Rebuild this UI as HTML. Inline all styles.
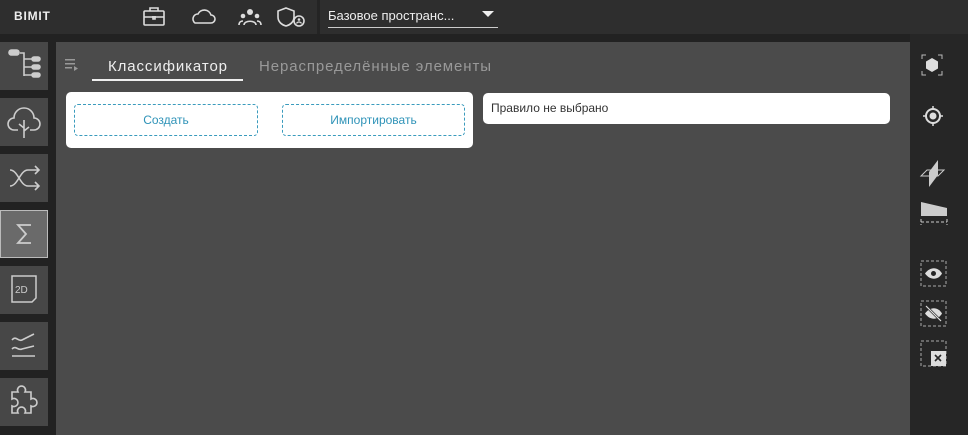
<!DOCTYPE html>
<html><head><meta charset="utf-8"><style>
*{margin:0;padding:0;box-sizing:border-box}
body{width:968px;height:435px;background:#222;font-family:"Liberation Sans",sans-serif;position:relative;overflow:hidden}
.top{position:absolute;left:0;top:0;width:968px;height:34px;background:#2e2e2e}
.sep{position:absolute;left:317px;top:0;width:3px;height:34px;background:#242424}
.main{position:absolute;left:56px;top:42px;width:854px;height:393px;background:#4b4b4b}
.rb{position:absolute;left:910px;top:34px;width:58px;height:401px;background:#262626}
.lb{position:absolute;left:0;width:48px;height:48px;background:#474747}
.lb svg{position:absolute;left:0;top:0}
.card{position:absolute;background:#fff;border-radius:5px}
.btn{position:absolute;border:1px dashed #3a9bbd;border-radius:4px;color:#2f93b8;font-size:12px;text-align:center;line-height:30px}
svg{display:block}
</style></head><body>
<div class="top"></div><div class="sep"></div>
<div style="position:absolute;left:14px;top:9px;color:#eee;font-weight:bold;font-size:12px;letter-spacing:0.8px">BIMIT</div>
<svg style="position:absolute;left:140px;top:4px" width="170" height="26" fill="none" stroke="#ddd" stroke-width="1.6">
<rect x="4" y="7" width="20" height="14" rx="1"/><path d="M10 7V4h8v3M4 13h20M13 12v3h2v-3"/>
<path d="M55 19h16a4 4 0 0 0 0-8 7 7 0 0 0-13-1 5 5 0 0 0-3 9z"/>
<g fill="#ddd" stroke="none"><circle cx="110" cy="8" r="3"/><circle cx="103" cy="12" r="2.3"/><circle cx="117" cy="12" r="2.3"/></g>
<path d="M104 21c0-5 12-5 12 0M99 21c0-3 2-4 4-4M121 21c0-3-2-4-4-4"/>
<path d="M146 4l8 3v6c0 5-4 8-8 9-4-1-8-4-8-9V7z"/><circle cx="159" cy="17" r="5" fill="#2e2e2e"/><circle cx="159" cy="15.5" r="1.3" fill="#ddd" stroke="none"/><path d="M156.5 19.5c1-2 4-2 5 0" stroke-width="1.2"/>
</svg>
<div style="position:absolute;left:328px;top:8px;color:#eee;font-size:13px">Базовое пространс...</div>
<div style="position:absolute;left:328px;top:27px;width:170px;height:1px;background:#ccc"></div>
<div style="position:absolute;left:482px;top:11px;width:0;height:0;border-left:6px solid transparent;border-right:6px solid transparent;border-top:6px solid #eee"></div>

<div class="lb" style="top:42px"><svg width="48" height="48" fill="none" stroke="#ccc" stroke-width="1.6"><rect x="9" y="8" width="10" height="5" rx="2.5" fill="#ccc"/><path d="M20 11h4v23M24 17h8M24 25h8M24 33h8"/><rect x="32" y="15" width="8" height="4" rx="2" fill="#ccc"/><rect x="32" y="23" width="8" height="4" rx="2" fill="#ccc"/><rect x="32" y="31" width="8" height="4" rx="2" fill="#ccc"/></svg></div>
<div class="lb" style="top:98px"><svg width="48" height="48" fill="none" stroke="#ccc" stroke-width="1.6"><path d="M18 32h-4a6 6 0 0 1 0-12 10 10 0 0 1 20 0 6 6 0 0 1 0 12h-4M24 40V22M24 30l-5-4M24 33l5-4"/></svg></div>
<div class="lb" style="top:154px"><svg width="48" height="48" fill="none" stroke="#ccc" stroke-width="1.6"><path d="M10 16c8 0 10 16 18 16h11M10 32c8 0 10-16 18-16h11M35 12l4 4-4 4M35 28l4 4-4 4"/></svg></div>
<div class="lb" style="top:210px;background:#6a6a6a;border:1px solid #bbb"><svg width="46" height="46" fill="none" stroke="#ccc" stroke-width="1.8"><path d="M30 14H17l8 9-8 9h13"/></svg></div>
<div class="lb" style="top:266px"><svg width="48" height="48" fill="none" stroke="#ccc" stroke-width="1.5"><path d="M12 10h24v22l-4 4H12z"/><text x="15" y="27" fill="#ccc" stroke="none" font-size="10" font-family="Liberation Sans">2D</text></svg></div>
<div class="lb" style="top:322px"><svg width="48" height="48" fill="none" stroke="#ccc" stroke-width="1.6"><path d="M12 18c4-5 6 2 10 0l12-6M12 27c4-4 6 2 10 0l12-3M12 34h23"/></svg></div>
<div class="lb" style="top:378px"><svg width="48" height="48" fill="none" stroke="#ccc" stroke-width="1.6"><path d="M12 14h6a4 4 0 1 1 7 0h6v7a4 4 0 1 1 0 7v7h-6a4 4 0 1 0-7 0h-6v-7a4 4 0 1 0 0-7z"/></svg></div>

<div class="main"></div>
<svg style="position:absolute;left:64px;top:57px" width="16" height="16" fill="#999"><rect x="1" y="2" width="10" height="1.5"/><rect x="1" y="6" width="10" height="1.5"/><rect x="1" y="10" width="7" height="1.5"/><path d="M10 9l4 2.5-4 2.5z"/></svg>
<div style="position:absolute;left:108px;top:58px;color:#eee;font-size:15px;letter-spacing:0.9px">Классификатор</div>
<div style="position:absolute;left:92px;top:79px;width:151px;height:2px;background:#eee"></div>
<div style="position:absolute;left:259px;top:58px;color:#999;font-size:15px;letter-spacing:0.9px">Нераспределённые элементы</div>
<div class="card" style="left:66px;top:92px;width:407px;height:56px"></div>
<div class="btn" style="left:74px;top:104px;width:184px;height:32px">Создать</div>
<div class="btn" style="left:282px;top:104px;width:183px;height:32px">Импортировать</div>
<div class="card" style="left:483px;top:93px;width:407px;height:31px"><div style="position:absolute;left:8px;top:8px;font-size:12px;color:#333">Правило не выбрано</div></div>

<div class="rb"></div>
<svg style="position:absolute;left:910px;top:40px" width="58" height="340" fill="none" stroke="#bbb" stroke-width="1">
<path d="M12 19v-4h4M28 15h4v4M32 31v4h-4M16 35h-4v-4"/><path d="M22 18l6 3.5v7L22 32l-6-3.5v-7z" fill="#ddd" stroke="none"/>
<circle cx="23" cy="76" r="7" stroke="#ddd" stroke-width="2"/><circle cx="23" cy="76" r="3.5" fill="#ddd" stroke="none"/><path d="M23 66v3M23 83v3M13 76h3M30 76h3" stroke="#ddd" stroke-width="1.5"/>
<path d="M28 120l-9 12V147l9-12z" fill="#ccc" stroke="none"/><path d="M11 136l6-6h17l-6 6z" stroke="#ccc"/>
<path d="M11 162l26 6v8H11z" fill="#ccc" stroke="none"/><path d="M11 182h26M11 179v6M37 179v6" stroke="#ccc" stroke-dasharray="3 2"/>
<rect x="11" y="221" width="25" height="25" stroke-dasharray="3 2" stroke="#aaa"/><path d="M15 233.5c5-7 13-7 17 0-4 7-12 7-17 0z" fill="#ddd" stroke="none"/><circle cx="23.5" cy="233.5" r="2.5" fill="#262626" stroke="none"/>
<rect x="11" y="261" width="25" height="25" stroke-dasharray="3 2" stroke="#aaa"/><path d="M15 273.5c5-7 13-7 17 0-4 7-12 7-17 0z" fill="#ddd" stroke="none"/><path d="M16 266l15 15" stroke="#262626" stroke-width="2.5"/><path d="M16 266l15 15" stroke="#ddd" stroke-width="1.2"/>
<rect x="11" y="301" width="25" height="25" stroke-dasharray="3 2" stroke="#aaa"/><rect x="21" y="311" width="15" height="15" fill="#ddd" stroke="none"/><path d="M25 315l6 6M31 315l-6 6" stroke="#262626" stroke-width="1.6"/>
</svg>
</body></html>
